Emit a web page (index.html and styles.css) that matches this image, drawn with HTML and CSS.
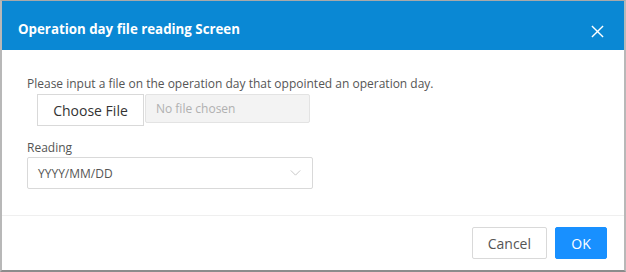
FILE: index.html
```html
<!DOCTYPE html>
<html lang="en">
<head>
<meta charset="UTF-8" />
<title>Operation day file reading Screen</title>
<link rel="stylesheet" href="styles.css">
</head>
<body>

<div class="dialog">
  <!-- Header -->
  <div class="dialog-header">
    <span class="dialog-title">Operation day file reading Screen</span>
    <svg class="close" viewBox="0 0 14 14" xmlns="http://www.w3.org/2000/svg">
      <line x1="1" y1="1" x2="13" y2="13" stroke="#fff" stroke-width="1.5" />
      <line x1="13" y1="1" x2="1" y2="13" stroke="#fff" stroke-width="1.5" />
    </svg>
  </div>

  <!-- Body -->
  <div class="dialog-body">
    <p class="hint">Please input a file on the operation day that oppointed an operation day.</p>
    <div class="file-row">
      <div class="file-btn">Choose File</div>
      <div class="file-name">No file chosen</div>
    </div>

    <label class="field-label">Reading</label>
    <div class="select">
      <span>YYYY/MM/DD</span>
      <svg class="chevron" viewBox="0 0 12 7" xmlns="http://www.w3.org/2000/svg">
        <polyline points="0.5,0.5 6,6 11.5,0.5" fill="none" stroke="#bfbfbf" stroke-width="1" />
      </svg>
    </div>
  </div>

  <!-- Footer -->
  <div class="dialog-footer">
    <button class="btn">Cancel</button>
    <button class="btn btn-primary">OK</button>
  </div>
</div>

</body>
</html>
```

FILE: styles.css
```css
body {
  margin: 0;
  font-family: 'Open Sans', 'Noto Sans', sans-serif;
  background: #fff;
}
.dialog {
  width: 626px;
  height: 272px;
  box-sizing: border-box;
  border-top: 1px solid #a9a9a9;
  border-left: 2px solid #b8b8b8;
  border-right: 2px solid #b8b8b8;
  border-bottom: 2px solid #8c8c8c;
  display: flex;
  flex-direction: column;
}
.dialog-header {
  height: 49px;
  background: #0a88d4;
  display: flex;
  align-items: center;
  justify-content: space-between;
  padding: 0 20px 0 16px;
}
.dialog-title {
  color: #fff;
  font-weight: 700;
  font-size: 13.3px;
  margin-top: 6px;
}
.close {
  width: 13px;
  height: 13px;
  margin-top: 12px;
}
.dialog-body {
  padding: 26px 25px 0;
  height: 139px;
  border-bottom: 1px solid #efefef;
}
.hint {
  margin: 0;
  font-size: 12px;
  color: #555;
  line-height: 16px;
}
.file-row {
  display: flex;
  align-items: flex-start;
  margin: 2px 0 0 10px;
}
.file-btn {
  width: 107px;
  height: 32px;
  box-sizing: border-box;
  border: 1px solid #d9d9d9;
  font-size: 14px;
  color: #333;
  display: flex;
  align-items: center;
  justify-content: center;
}
.file-name {
  width: 165px;
  height: 29px;
  box-sizing: border-box;
  margin-left: 1px;
  border: 1px solid #e3e3e3;
  border-radius: 2px;
  background: #f3f3f3;
  color: #b0b0b0;
  font-size: 12px;
  display: flex;
  align-items: center;
  padding-left: 10px;
}
.field-label {
  display: block;
  margin-top: 14px;
  font-size: 12px;
  color: #555;
  line-height: 16px;
}
.select {
  width: 286px;
  height: 32px;
  box-sizing: border-box;
  margin-top: 1px;
  border: 1px solid #d9d9d9;
  border-radius: 2px;
  display: flex;
  align-items: center;
  justify-content: space-between;
  padding: 0 11px 0 10px;
  font-size: 12px;
  color: #555;
}
.chevron {
  width: 11px;
  height: 6px;
}
.dialog-footer {
  flex: 1;
  display: flex;
  justify-content: flex-end;
  align-items: flex-start;
  gap: 8px;
  padding: 11px 17px 0 0;
}
.btn {
  height: 32px;
  padding: 0 15px;
  font-family: 'Open Sans', 'Noto Sans', sans-serif;
  font-size: 14px;
  color: #555;
  background: #fff;
  border: 1px solid #d9d9d9;
  border-radius: 2px;
}
.btn-primary {
  width: 52px;
  background: #1890ff;
  border-color: #1890ff;
  color: #fff;
}
```
